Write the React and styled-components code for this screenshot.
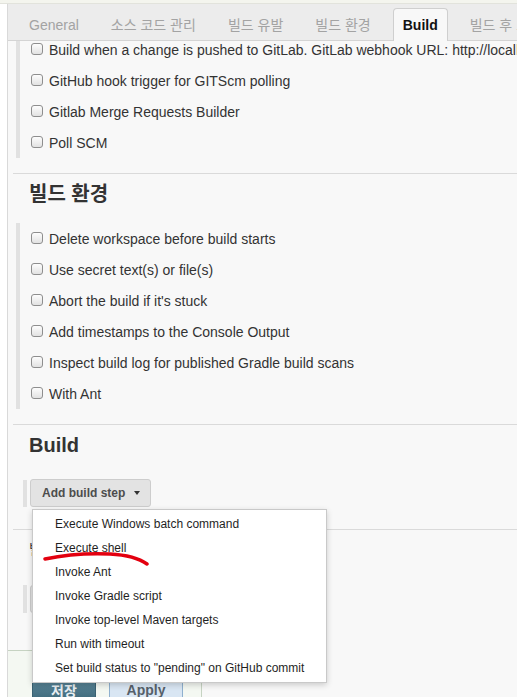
import React from 'react';
import styled, { createGlobalStyle } from 'styled-components';

const GlobalStyle = createGlobalStyle`
  html, body {
    margin: 0;
    padding: 0;
    overflow: hidden;
    background: #fff;
  }
  body {
    font-family: "Liberation Sans", Arial, "Noto Sans CJK KR", sans-serif;
    color: #333;
  }
`;

const tabs = ["General", "소스 코드 관리", "빌드 유발", "빌드 환경", "Build", "빌드 후 조치"];

const triggers = [
  "Build when a change is pushed to GitLab. GitLab webhook URL: http://localhost:8080/project/test",
  "GitHub hook trigger for GITScm polling",
  "Gitlab Merge Requests Builder",
  "Poll SCM",
];

const envOptions = [
  "Delete workspace before build starts",
  "Use secret text(s) or file(s)",
  "Abort the build if it's stuck",
  "Add timestamps to the Console Output",
  "Inspect build log for published Gradle build scans",
  "With Ant",
];

const steps = [
  "Execute Windows batch command",
  "Execute shell",
  "Invoke Ant",
  "Invoke Gradle script",
  "Invoke top-level Maven targets",
  "Run with timeout",
  'Set build status to "pending" on GitHub commit',
];

const Page = styled.div`
  width: 517px;
  height: 697px;
  display: flex;
  flex-direction: column;
  overflow: hidden;
`;

const TopStrip = styled.div`
  height: 3px;
  flex: none;
  background: #f4f5ee;
  border-bottom: 1px solid #e2e3dc;
`;

const Body = styled.div`
  flex: 1;
  display: flex;
  min-height: 0;
`;

const Gutter = styled.div`
  width: 7px;
  flex: none;
  background: #fff;
  border-right: 1px solid #d9d9d9;
`;

const Main = styled.div`
  flex: 1;
  display: flex;
  flex-direction: column;
  background: #f8f8f8;
  min-width: 0;
`;

const TabBar = styled.div`
  height: 36px;
  flex: none;
  display: flex;
  align-items: flex-end;
  padding-left: 5px;
  background: #ececec;
  border-bottom: 1px solid #d4d4d4;
  position: relative;
  z-index: 2;
  white-space: nowrap;
`;

const Tab = styled.div`
  box-sizing: border-box;
  height: 33px;
  line-height: 32px;
  margin: 0 6px -1px;
  padding: 0 9px;
  font-size: 14px;
  color: ${p => (p.$active ? '#111' : '#a3a3a3')};
  font-weight: ${p => (p.$active ? 'bold' : 'normal')};
  background: ${p => (p.$active ? '#f8f8f8' : 'transparent')};
  border: 1px solid ${p => (p.$active ? '#cfcfcf' : 'transparent')};
  border-bottom: none;
  border-radius: 4px 4px 0 0;
  font-family: "Liberation Sans", Arial, "Noto Sans CJK KR", sans-serif;
`;

const Content = styled.div`
  flex: 1;
  overflow: hidden;
  position: relative;
`;

const Scroller = styled.div`
  margin-top: -7px;
`;

const Group = styled.div`
  margin-left: ${p => p.$indent ?? 8}px;
  border-left: 4px solid #e1e1e1;
  padding-left: ${p => p.$pad ?? 11}px;
`;

const Row = styled.label`
  height: 31px;
  display: flex;
  align-items: center;
  gap: 6px;
  font-size: 14px;
  color: #333;
  white-space: nowrap;
`;

const Box = styled.span`
  flex: none;
  box-sizing: border-box;
  width: 12px;
  height: 12px;
  border: 1px solid #8e8e8e;
  border-radius: 3px;
  background: linear-gradient(#fdfdfd, #e2e2e2);
  margin-top: -2px;
`;

const Section = styled.div`
  margin: ${p => p.$gap ?? 15}px 0 0 5px;
  border-top: 1px solid #dadada;
`;

const Heading = styled.h2`
  margin: 8px 0 0 16px;
  font-size: 20px;
  line-height: 24px;
  font-weight: bold;
  color: #333;
  font-family: "Liberation Sans", Arial, "Noto Sans CJK KR", sans-serif;
`;

const GroupWrap = styled.div`
  margin-top: ${p => p.$top}px;
`;

const StepWrap = styled.div`
  position: relative;
  display: inline-block;
`;

const StepButton = styled.button`
  height: 28px;
  display: flex;
  align-items: center;
  gap: 9px;
  padding: 0 10px 0 11px;
  margin-top: -1px;
  font-family: "Liberation Sans", Arial, sans-serif;
  font-size: 12px;
  font-weight: bold;
  color: #4d4d4d;
  background: #e3e3e3;
  border: 1px solid #cdcdcd;
  border-radius: 3px;
`;

const Caret = styled.span`
  width: 0;
  height: 0;
  border-left: 3.5px solid transparent;
  border-right: 3.5px solid transparent;
  border-top: 4px solid #333;
`;

const Menu = styled.ul`
  position: absolute;
  top: 29px;
  left: 2px;
  z-index: 5;
  width: 295px;
  box-sizing: border-box;
  margin: 0;
  padding: 2px 0;
  list-style: none;
  background: #fff;
  border: 1px solid #c9c9c9;
  box-shadow: 0 2px 6px rgba(0, 0, 0, 0.18);
`;

const MenuItem = styled.li`
  height: 24px;
  line-height: 24px;
  padding-left: 22px;
  font-size: 12px;
  color: #1f1f1f;
  white-space: nowrap;
`;

const Scribble = styled.svg`
  position: absolute;
  left: 9px;
  top: 41px;
  pointer-events: none;
`;

const Faint = styled.div`
  margin: 12px 0 0 16px;
  font-size: 14px;
  line-height: 14px;
  color: #444;
`;

const BottomBar = styled.div`
  width: 194px;
  height: 60px;
  box-sizing: border-box;
  margin-top: ${p => p.$top}px;
  padding: 28px 0 0 24px;
  display: flex;
  gap: 13px;
  background: #f4f8f2;
  border-top: 1px solid #c6d3c2;
  border-right: 1px solid #c6d3c2;
`;

const SaveButton = styled.button`
  height: 22px;
  width: ${p => p.$w}px;
  font-family: "Liberation Sans", Arial, "Noto Sans CJK KR", sans-serif;
  font-size: 14px;
  font-weight: bold;
  border-radius: 2px;
  padding: 0;
  color: ${p => (p.$primary ? '#e8eef2' : '#56606a')};
  background: ${p => (p.$primary ? 'linear-gradient(#5a8597, #3f6a7c)' : '#d9e6f3')};
  border: 1px solid ${p => (p.$primary ? '#3a6172' : '#8fb0cf')};
`;

const Check = ({ label }) => (
  <Row>
    <Box />
    {label}
  </Row>
);

export default function App() {
  return (
    <>
      <GlobalStyle />
      <Page>
        <TopStrip />
        <Body>
          <Gutter />
          <Main>
            <TabBar>
              {tabs.map(t => (
                <Tab key={t} $active={t === 'Build'}>{t}</Tab>
              ))}
            </TabBar>
            <Content>
              <Scroller>
                <Group>
                  {triggers.map(t => <Check key={t} label={t} />)}
                </Group>

                <Section>
                  <Heading>빌드 환경</Heading>
                  <GroupWrap $top={17}>
                    <Group $indent={3}>
                      {envOptions.map(t => <Check key={t} label={t} />)}
                    </Group>
                  </GroupWrap>
                </Section>

                <Section $gap={15}>
                  <Heading>Build</Heading>
                  <GroupWrap $top={23}>
                    <Group $indent={10} $pad={3}>
                      <StepWrap>
                        <StepButton>
                          Add build step <Caret />
                        </StepButton>
                        <Menu>
                          {steps.map(s => <MenuItem key={s}>{s}</MenuItem>)}
                          <Scribble width="112" height="16" viewBox="0 0 112 16">
                            {/* hand-drawn red underline */}
                            <path
                              d="M3 8 C 22 4, 45 2, 68 3 C 86 4, 98 8, 105 13"
                              fill="none"
                              stroke="#e3000f"
                              strokeWidth="3.5"
                              strokeLinecap="round"
                            />
                          </Scribble>
                        </Menu>
                      </StepWrap>
                    </Group>
                  </GroupWrap>
                </Section>

                <Section $gap={22}>
                  <Faint>빌드 후 조치</Faint>
                  <GroupWrap $top={30}>
                    <Group $indent={10} $pad={3}>
                      <StepButton>Add post-build action <Caret /></StepButton>
                    </Group>
                  </GroupWrap>
                </Section>

                <BottomBar $top={37}>
                  <SaveButton $primary $w={64}>저장</SaveButton>
                  <SaveButton $w={74}>Apply</SaveButton>
                </BottomBar>
              </Scroller>
            </Content>
          </Main>
        </Body>
      </Page>
    </>
  );
}
